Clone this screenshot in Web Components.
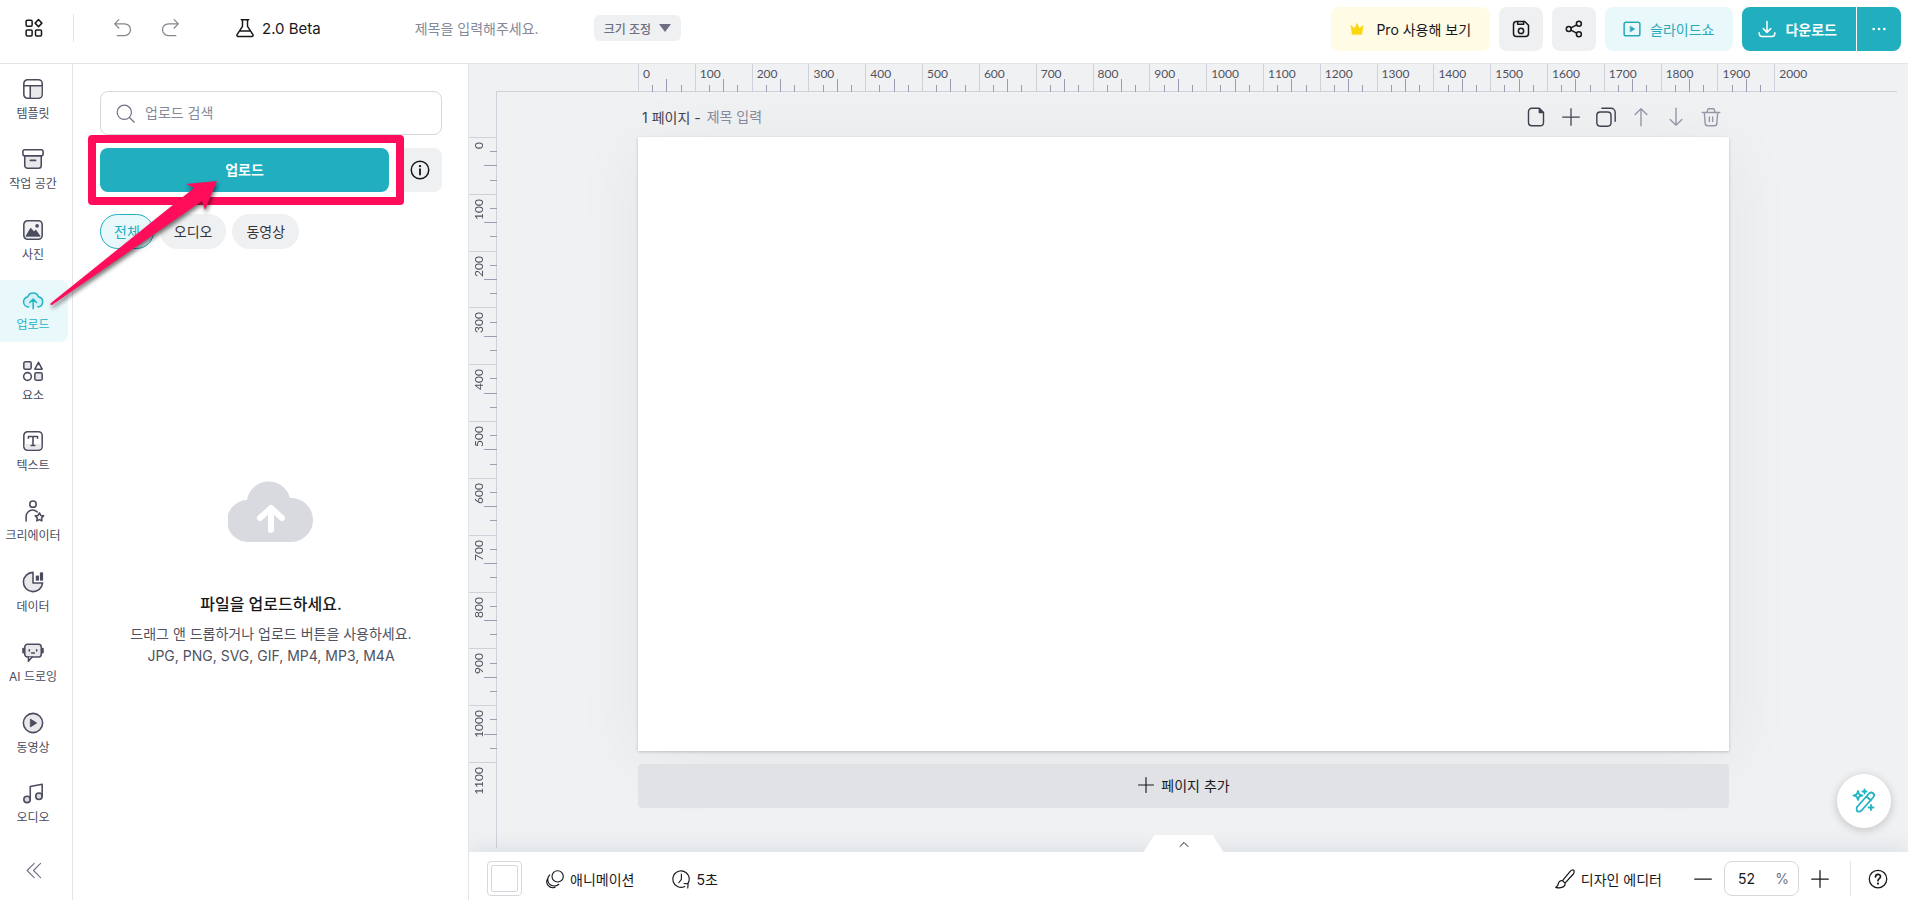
<!DOCTYPE html>
<html lang="ko">
<head>
<meta charset="UTF-8">
<meta name="viewport" content="width=device-width, initial-scale=1.0">
<title>디자인 에디터</title>
<style>
  :root {
    --teal: #21aebf;
    --teal-soft: #e8f8fb;
    --ink: #17181c;
    --text: #4a4c5e;
    --muted: #858999;
    --chip: #eff0f2;
    --line: #e3e4e8;
    --field-line: #d6d8dd;
    --ruler-line: #cfd1da;
    --tick: #9a9db1;
    --callout: #ff0c5a;
  }
  body {
    margin: 0;
    font-family: Inter, "Noto Sans CJK KR", sans-serif;
    font-size: 14px;
    color: var(--ink);
  }
</style>
</head>
<body>
<editor-app>
  <editor-header slot="header"></editor-header>
  <side-nav slot="nav">
    <nav-item icon="template">템플릿</nav-item>
    <nav-item icon="archive">작업 공간</nav-item>
    <nav-item icon="photo">사진</nav-item>
    <nav-item icon="cloud" active>업로드</nav-item>
    <nav-item icon="shapes">요소</nav-item>
    <nav-item icon="text">텍스트</nav-item>
    <nav-item icon="creator">크리에이터</nav-item>
    <nav-item icon="chart">데이터</nav-item>
    <nav-item icon="robot">AI 드로잉</nav-item>
    <nav-item icon="video">동영상</nav-item>
    <nav-item icon="music">오디오</nav-item>
  </side-nav>
  <upload-panel slot="panel">
    <filter-chip active>전체</filter-chip>
    <filter-chip>오디오</filter-chip>
    <filter-chip>동영상</filter-chip>
  </upload-panel>
  <work-space slot="workspace"></work-space>
  <bottom-bar slot="footer"></bottom-bar>
</editor-app>

<script>
/**
 * Design editor - layout and Web Components
 */

// 24x24 icons, stroked with the current colour
const ICONS = {
  apps: '<g stroke-width="2"><rect x="1.5" y="1.5" width="8" height="8" rx="1.5"/><path d="M18 .8 22.500 5.500 18 10.200l-4.500-4.700z"/><rect x="1.5" y="14.5" width="8" height="8" rx="1.5"/><rect x="14" y="14.5" width="8" height="8" rx="1.5"/></g>',
  undo: '<path d="M7 2 2 7l5 5M2 7h12a7 7 0 0 1 0 14H5"/>',
  redo: '<path d="m17 2 5 5-5 5M22 7H10a7 7 0 0 0 0 14h9"/>',
  flask: '<g stroke-width="1.800"><path d="M7.500 2h9M9 2v8L2.500 20a1.500 1.500 0 0 0 1.200 2.300h16.600a1.500 1.500 0 0 0 1.200-2.300L15 10V2M5.500 15.500h13"/></g>',
  crown: '<path d="M4 21 1.500 6 8 11l4-8.500L16 11l6.500-5L20 21z" fill="currentColor" stroke-width="1"/>',
  save: '<g stroke-width="2"><path d="M6 2h11l5 5v11a4 4 0 0 1-4 4H6a4 4 0 0 1-4-4V6a4 4 0 0 1 4-4z"/><path d="M7.500 2v3.500h8V2"/><circle cx="12" cy="14.500" r="3.500"/></g>',
  share: '<g stroke-width="2"><circle cx="5" cy="12" r="3.300"/><circle cx="18.500" cy="5" r="3.300"/><circle cx="18.500" cy="19" r="3.300"/><path d="m8 10.500 7.500-4M8 13.500l7.500 4"/></g>',
  slideshow: '<rect x="1.500" y="3" width="21" height="18" rx="2.500" stroke-width="2"/><path d="m10 8.500 5.500 3.500-5.500 3.500z" fill="currentColor" stroke-width="1"/>',
  download: '<g stroke-width="2"><path d="M12 2v14M7 11.500l5 5 5-5M1.500 17c0 3.500 1 5 4 5h13c3 0 4-1.500 4-5"/></g>',
  dots: '<g fill="currentColor" stroke="none"><circle cx="4" cy="12" r="2"/><circle cx="12" cy="12" r="2"/><circle cx="20" cy="12" r="2"/></g>',
  template: '<rect x="2" y="2" width="20" height="20" rx="4"/><path d="M9 9h12v9a3 3 0 0 1-3 3H9z" fill="#e9e9ec" stroke="none"/><path d="M2 8.500h20M9 8.500V22"/>',
  archive: '<path d="M3 8.500h18V19a3 3 0 0 1-3 3H6a3 3 0 0 1-3-3z" fill="#e9e9ec"/><rect x="1" y="2" width="22" height="6.500" rx="2" fill="#fff"/><path d="M9 13.500h6"/>',
  photo: '<rect x="2" y="2" width="20" height="20" rx="4" fill="#f1f1f3"/><path d="M4.500 18.500 9.500 10l3.500 4 2-2 4.500 6.500z" fill="currentColor" stroke-width="1"/><circle cx="16.500" cy="7.500" r="2" fill="currentColor" stroke="none"/>',
  cloud: '<path d="M7 19.500a5.500 5.500 0 0 1-.8-10.900A6.200 6.200 0 0 1 18 8.600 5.500 5.500 0 0 1 17.500 19.500" fill="#d5f1f5"/><path d="M12.200 21.500v-10M8.500 14.800l3.700-3.700 3.700 3.700"/>',
  shapes: '<rect x="2" y="2" width="8" height="8" rx="1.500" fill="#e9e9ec"/><path d="M18 2.500 22 10h-8z"/><circle cx="6" cy="18" r="4.200"/><rect x="14" y="14" width="8" height="8" rx="1.500" fill="#e9e9ec"/>',
  text: '<rect x="2" y="2" width="20" height="20" rx="4"/><path d="M3 15h18v3a3 3 0 0 1-3 3H6a3 3 0 0 1-3-3z" fill="#e9e9ec" stroke="none"/><path d="M7 9V7h10v2M12 7v10M10 17h4"/>',
  creator: '<circle cx="12" cy="4.500" r="3.500"/><path d="M4.500 23v-5a7 7 0 0 1 7-7c2 0 3.800.8 5 2"/><path d="m19 14 1.500 2.800 3 .5-2.200 2.300.4 3.200-2.700-1.400-2.800 1.400.5-3.200-2.200-2.300 3-.5z"/>',
  chart: '<path d="M12 1.500A10.500 10.500 0 1 0 22.500 13H12z" fill="#e9e9ec"/><g fill="currentColor" stroke="none"><rect x="15" y="5" width="3.500" height="5.500"/><rect x="19.500" y="1.500" width="3.500" height="9"/></g>',
  robot: '<rect x="3" y="3.500" width="18" height="14" rx="3" fill="#e9e9ec"/><path d="M7 17.500v4.500l4-4.500" fill="#e9e9ec"/><path d="M1.500 8.500v4M22.500 8.500v4" stroke-width="2.500"/><path d="M8 9.500v1.500M16 9.500v1.500M10.500 13h3"/>',
  video: '<circle cx="12" cy="12" r="10.500" fill="#e9e9ec"/><path d="m9.500 8 6.500 4-6.500 4z" fill="currentColor" stroke-width="1"/>',
  music: '<circle cx="5.500" cy="19" r="3.500" fill="#d9dade"/><circle cx="18.500" cy="15.500" r="3.500" fill="#d9dade"/><path d="M9 19V5l13-2.500v13"/>',
  collapse: '<path d="M13 2 3 12l10 10M22 2 12 12l10 10"/>',
  search: '<circle cx="10.500" cy="10.500" r="9"/><path d="m17 17 6 6"/>',
  info: '<circle cx="12" cy="12" r="10.500" stroke-width="1.800"/><path d="M12 11v6.500" stroke-width="2.200"/><circle cx="12" cy="7.300" r="1.400" fill="currentColor" stroke="none"/>',
  file: '<g stroke-width="1.700"><path d="M7 1.500h9l5 5v12a4 4 0 0 1-4 4H7a4 4 0 0 1-4-4v-13a4 4 0 0 1 4-4z"/><path d="M16 2v4.500h4.500z" fill="currentColor"/></g>',
  plus: '<path d="M12 2v20M2 12h20"/>',
  minus: '<path d="M2 12h20"/>',
  copy: '<g stroke-width="1.700"><rect x="1" y="6" width="17" height="17" rx="4"/><path d="M7 1.500h11a5 5 0 0 1 5 5V17"/></g>',
  up: '<path d="M12 22.500V2M5 9l7-7 7 7" stroke-width="1.700"/>',
  down: '<path d="M12 1.500V22M5 15l7 7 7-7" stroke-width="1.700"/>',
  trash: '<path d="M1.500 6.500h21M4 6.500l1 13a3 3 0 0 0 3 3h8a3 3 0 0 0 3-3l1-13M7 6.500l1.500-4.500h7L17 6.500M10 12v5.500M14 12v5.500" stroke-width="1.700"/>',
  motion: '<circle cx="15.500" cy="8.500" r="7.500"/><path d="M5 6.500a8.500 8.500 0 0 0 12 12.500M2.500 11a8 8 0 0 0 9.500 12"/>',
  clock: '<path d="M17 22A11 11 0 1 1 23 12c0 2.500-.8 4.500-2 6.200M12.500 5.500v7L9 17M16 18l5.500.5-.5 5.500"/>',
  brush: '<path d="M22.500 1.500c-1-.8-3-.3-4 1L9 14l3 3L22 6c1-1.300 1.300-3.700.5-4.500zM9 14c-2.500-.5-4.500 1-5 3.500-.300 2-1.300 3.500-3 4.500 3.500 1.200 9 .5 10.500-2 .5-1 .8-2 .5-3z"/>',
  help: '<circle cx="12" cy="12" r="10.500"/><path d="M9 9.500c0-4 6-4 6-.5 0 2.500-3 2.500-3 5" stroke-width="2"/><circle cx="12" cy="17.500" r="1.300" fill="currentColor" stroke="none"/>',
  caret: '<path d="m4 17 8-8 8 8" stroke-width="2"/>',
  wand: '<path d="M5.500 22.500c-1-1-1-3.500-.5-4.500L17 4.500c3-2.500 6.500.5 4.500 3.500L9.500 21.500c-1 1-3 1.300-4 1zM14.500 7.500l4.500 4M6 2l1.200 3.300L10.500 6.500 7.200 7.700 6 11 4.800 7.700 1.500 6.500l3.300-1.200z"/><path d="M12.500.5v4M10.500 2.500h4M19 16v5M16.500 18.500h5"/>'
};

// Reset shared by every shadow root that holds controls
const BASE = `
  * { box-sizing: border-box; }
  button, input {
    font: inherit;
    color: inherit;
    margin: 0;
    padding: 0;
    border: 0;
    background: none;
    outline: none;
  }
  button {
    cursor: pointer;
    display: flex;
    align-items: center;
    justify-content: center;
    white-space: nowrap;
  }
  input::placeholder { color: var(--muted); opacity: 1; }
`;

class BaseElement extends HTMLElement {
  constructor() {
    super();
    this.attachShadow({ mode: 'open' });
  }

  connectedCallback() {
    this.shadowRoot.innerHTML = `<style>${BASE}</style>${this.template()}`;
  }
}

// --- Icon ---
class UiIcon extends BaseElement {
  template() {
    const size = this.getAttribute('size') || 20;
    const weight = this.getAttribute('weight') || 1.5;
    return `
      <style>
        :host { display: block; flex: none; }
        svg { display: block; overflow: visible; }
      </style>
      <svg width="${size}" height="${size}" viewBox="0 0 24 24" fill="none" stroke="currentColor"
        stroke-width="${weight}" stroke-linecap="round" stroke-linejoin="round" aria-hidden="true">
        ${ICONS[this.getAttribute('name')]}
      </svg>
    `;
  }
}
customElements.define('ui-icon', UiIcon);

// --- App Shell ---
class EditorApp extends BaseElement {
  template() {
    return `
      <style>
        :host {
          display: grid;
          position: relative;
          height: 100vh;
          grid-template-columns: 73px 396px minmax(0, 1fr);
          grid-template-rows: 64px minmax(0, 1fr) 48px;
          grid-template-areas: "header header header" "nav panel work" "nav panel foot";
          overflow: hidden;
        }
        slot { display: contents; }
        ::slotted([slot=header]) { grid-area: header; }
        ::slotted([slot=nav]) { grid-area: nav; }
        ::slotted([slot=panel]) { grid-area: panel; z-index: 1; }
        ::slotted([slot=workspace]) { grid-area: work; }
        ::slotted([slot=footer]) { grid-area: foot; }
        .pointer {
          position: absolute;
          z-index: 2;
          left: 40px;
          top: 170px;
          pointer-events: none;
          filter: drop-shadow(1px 3px 2px rgba(0, 0, 0, .55));
        }
      </style>
      <slot name="header"></slot>
      <slot name="nav"></slot>
      <slot name="panel"></slot>
      <slot name="workspace"></slot>
      <slot name="footer"></slot>
      <svg class="pointer" width="190" height="150" viewBox="0 0 190 150" aria-hidden="true">
        <path d="M11 133 154 18l-8-4 31-3-12 29-3-9L12 135q-3 0-1-2z" fill="var(--callout)"/>
      </svg>
    `;
  }
}
customElements.define('editor-app', EditorApp);

// --- Header ---
class EditorHeader extends BaseElement {
  template() {
    return `
      <style>
        :host {
          display: flex;
          align-items: flex-start;
          justify-content: space-between;
          padding: 7px 7px 0 25px;
          border-bottom: 1px solid var(--line);
          box-sizing: border-box;
          background: #fff;
        }
        .left, .right { display: flex; align-items: center; }
        .left { height: 42px; }
        .left .sep { width: 1px; height: 28px; background: var(--line); margin: 0 39px 0 30px; }
        .history { gap: 27px; display: flex; color: #85878f; }
        .beta { gap: 7px; margin-left: 55px; font-size: 15px; }
        .name { width: 136px; margin-left: 94px; }
        .size {
          height: 26px;
          padding: 0 10px;
          gap: 8px;
          margin: 0 0 0 43px;
          border-radius: 6px;
          background: var(--chip);
          color: #6d7083;
          font-size: 12px;
          font-weight: 500;
        }
        .size i {
          border: 6px solid transparent;
          border-top: 8px solid currentColor;
          border-bottom: 0;
        }
        .right { gap: 9px; }
        .right button { height: 44px; border-radius: 8px; }
        .pro { background: #fffbe5; padding: 0 19px; gap: 12px; }
        .pro ui-icon { color: #fbd60b; }
        .square { width: 44px; background: var(--chip); }
        .slides { background: var(--teal-soft); color: #28a9b9; padding: 0 19px 0 18px; gap: 9px; }
        .split { display: flex; gap: 1px; color: #fff; font-weight: 700; }
        .split button { background: var(--teal); }
        .split .main { padding: 0 19px 0 16px; gap: 9px; border-radius: 8px 0 0 8px; }
        .split .more { width: 44px; border-radius: 0 8px 8px 0; }
      </style>
      <div class="left">
        <button aria-label="메뉴"><ui-icon name="apps" size="18"></ui-icon></button>
        <span class="sep"></span>
        <div class="history">
          <button aria-label="실행 취소"><ui-icon name="undo"></ui-icon></button>
          <button aria-label="다시 실행"><ui-icon name="redo"></ui-icon></button>
        </div>
        <button class="beta"><ui-icon name="flask"></ui-icon>2.0 Beta</button>
        <input class="name" type="text" aria-label="제목" placeholder="제목을 입력해주세요.">
        <button class="size">크기 조정<i></i></button>
      </div>
      <div class="right">
        <button class="pro"><ui-icon name="crown" size="14"></ui-icon>Pro 사용해 보기</button>
        <button class="square" aria-label="저장"><ui-icon name="save" size="18"></ui-icon></button>
        <button class="square" aria-label="공유"><ui-icon name="share" size="18"></ui-icon></button>
        <button class="slides"><ui-icon name="slideshow" size="18"></ui-icon>슬라이드쇼</button>
        <div class="split">
          <button class="main"><ui-icon name="download" size="18"></ui-icon>다운로드</button>
          <button class="more" aria-label="더 보기"><ui-icon name="dots" size="16"></ui-icon></button>
        </div>
      </div>
    `;
  }
}
customElements.define('editor-header', EditorHeader);

// --- Side Navigation ---
class NavItem extends BaseElement {
  template() {
    return `
      <style>
        :host { display: block; color: var(--text); }
        :host([active]) { color: #24b5c7; }
        button {
          width: 68px;
          height: 62px;
          padding: 1px 2px 0 0;
          flex-direction: column;
          gap: 5px;
          font-size: 12px;
          line-height: 18px;
          border-radius: 0 8px 8px 0;
        }
        :host([active]) button { background: var(--teal-soft); }
      </style>
      <button>
        <ui-icon name="${this.getAttribute('icon')}" size="22" weight="1.700"></ui-icon>
        <span><slot></slot></span>
      </button>
    `;
  }
}
customElements.define('nav-item', NavItem);

class SideNav extends BaseElement {
  template() {
    return `
      <style>
        :host {
          display: flex;
          flex-direction: column;
          border-right: 1px solid var(--line);
          box-sizing: border-box;
          background: #fff;
        }
        nav {
          flex: 1;
          display: flex;
          flex-direction: column;
          justify-content: space-between;
          padding-top: 5px;
        }
        .collapse { width: 66px; height: 60px; color: #6d7083; margin-top: 5px; }
      </style>
      <nav><slot></slot></nav>
      <button class="collapse" aria-label="접기"><ui-icon name="collapse" size="17"></ui-icon></button>
    `;
  }
}
customElements.define('side-nav', SideNav);

// --- Upload Panel ---
class FilterChip extends BaseElement {
  template() {
    return `
      <style>
        :host { display: block; color: #33343c; }
        :host([active]) { color: var(--teal); }
        button {
          height: 35px;
          padding: 0 13px 2px;
          border: 1px solid var(--chip);
          border-radius: 18px;
          background: var(--chip);
        }
        :host([active]) button { background: var(--teal-soft); border-color: var(--teal); }
      </style>
      <button><slot></slot></button>
    `;
  }
}
customElements.define('filter-chip', FilterChip);

class UploadPanel extends BaseElement {
  template() {
    return `
      <style>
        :host {
          display: flex;
          flex-direction: column;
          padding: 27px 26px 0 27px;
          border-right: 1px solid var(--line);
          box-sizing: border-box;
          background: #fff;
        }
        .search {
          display: flex;
          align-items: center;
          gap: 10px;
          height: 44px;
          padding: 0 15px;
          border: 1px solid var(--field-line);
          border-radius: 8px;
          color: #6d7083;
        }
        .search input { flex: 1; min-width: 0; padding-bottom: 2px; }
        .actions { display: flex; gap: 9px; margin-top: 13px; }
        .upload { flex: 1; position: relative; }
        .upload button {
          width: 100%;
          height: 44px;
          padding-bottom: 2px;
          border-radius: 8px;
          background: var(--teal);
          color: #fff;
          font-weight: 700;
        }
        .upload::after {
          content: "";
          position: absolute;
          inset: -13px -15px -13px -12px;
          border: 8px solid var(--callout);
          border-radius: 4px;
          box-shadow: inset 0 0 0 4px #fff;
          pointer-events: none;
        }
        .info { width: 44px; height: 44px; border-radius: 8px; background: var(--chip); }
        .chips { display: flex; gap: 6px; margin-top: 22px; }
        .empty {
          flex: 1;
          display: flex;
          flex-direction: column;
          align-items: center;
          padding-top: 231px;
          text-align: center;
          color: #50525f;
        }
        h2 { margin: 48px 0 5px; font-size: 16px; line-height: 28px; font-weight: 500; color: var(--ink); }
        p { margin: 0; line-height: 22px; white-space: nowrap; }
      </style>
      <label class="search">
        <ui-icon name="search" size="19"></ui-icon>
        <input type="text" aria-label="업로드 검색" placeholder="업로드 검색">
      </label>
      <div class="actions">
        <div class="upload"><button>업로드</button></div>
        <button class="info" aria-label="정보"><ui-icon name="info"></ui-icon></button>
      </div>
      <div class="chips"><slot></slot></div>
      <div class="empty">
        <svg width="86" height="62" viewBox="0 0 86 62" aria-hidden="true">
          <path d="M21 62a21 21 0 0 1-2-42 22 22 0 0 1 43-2 22 22 0 0 1 2 44z" fill="#d9dadf"/>
          <path d="M43 50V29M32 38l11-10 11 10" fill="none" stroke="#fff" stroke-width="6" stroke-linecap="round" stroke-linejoin="round"/>
        </svg>
        <h2>파일을 업로드하세요.</h2>
        <p>드래그 앤 드롭하거나 업로드 버튼을 사용하세요.<br>JPG, PNG, SVG, GIF, MP4, MP3, M4A</p>
      </div>
    `;
  }
}
customElements.define('upload-panel', UploadPanel);

// --- Ruler ---
// Each cell covers 100 units; "extent" is how many units the page spans.
class RulerStrip extends BaseElement {
  template() {
    const extent = Number(this.getAttribute('extent'));
    const last = Number(this.getAttribute('last'));
    let cells = '';
    for (let i = 0; i <= last; i += 100) {
      cells += `<div class="cell${i === last ? ' end' : ''}"><span>${i}</span><i></i><i class="mid"></i><i></i></div>`;
    }
    return `
      <style>
        :host { display: flex; min-width: 0; min-height: 0; font: 12px/14px Lato, sans-serif; color: #50525f; }
        :host([vertical]) { flex-direction: column; }
        .cell {
          flex: 0 0 calc(100% * 100 / ${extent});
          position: relative;
          display: flex;
          align-items: flex-end;
          justify-content: space-evenly;
          border-left: 1px solid var(--ruler-line);
        }
        span { position: absolute; left: 4px; top: 3px; }
        i { width: 1px; height: 7px; background: var(--tick); }
        .mid { height: 13px; }
        .end i { visibility: hidden; }
        :host([vertical]) .cell { flex-direction: column; border-left: 0; border-top: 1px solid var(--ruler-line); }
        :host([vertical]) span { left: 3px; top: 4px; writing-mode: vertical-rl; transform: rotate(180deg); }
        :host([vertical]) i { width: 7px; height: 1px; }
        :host([vertical]) .mid { width: 13px; }
      </style>
      ${cells}
    `;
  }
}
customElements.define('ruler-strip', RulerStrip);

// --- Workspace ---
class WorkSpace extends BaseElement {
  template() {
    return `
      <style>
        :host {
          display: grid;
          position: relative;
          grid-template-columns: 28px 141px minmax(0, 1fr) 179px;
          grid-template-rows: 28px 45px auto 1fr;
          background: #f0f1f3;
          overflow: hidden;
        }
        .line-x { grid-area: 1 / 1 / 2 / 5; border-bottom: 1px solid var(--ruler-line); margin: 0 11px 0 27px; }
        .line-y { grid-area: 2 / 1 / 5 / 2; border-right: 1px solid var(--ruler-line); margin-bottom: 4px; }
        .top { grid-area: 1 / 3; }
        .side { grid-area: 3 / 1; }
        .head {
          grid-area: 2 / 3;
          position: relative;
          z-index: 1;
          display: flex;
          align-items: center;
          padding: 4px 8px 0 4px;
          color: #3f414e;
        }
        .head input { flex: 1; min-width: 0; margin-left: 6px; }
        .tools { display: flex; gap: 15px; }
        .off { color: #9598a8; }
        .page {
          grid-area: 3 / 3;
          aspect-ratio: 16 / 9;
          background: #fff;
          box-shadow: 0 1px 3px rgba(0, 0, 0, .2), 0 10px 70px rgba(0, 0, 0, .05);
        }
        .add {
          grid-area: 4 / 3;
          align-self: start;
          position: relative;
          height: 44px;
          margin-top: 13px;
          padding-bottom: 2px;
          gap: 6px;
          border-radius: 4px;
          background: #e1e2e6;
        }
        .fab {
          position: absolute;
          right: 17px;
          bottom: 24px;
          width: 54px;
          height: 54px;
          border-radius: 50%;
          background: #fff;
          color: #22b3c4;
          box-shadow: 0 2px 10px rgba(0, 0, 0, .2);
        }
      </style>
      <div class="line-x"></div>
      <div class="line-y"></div>
      <ruler-strip class="top" extent="1920" last="2000"></ruler-strip>
      <ruler-strip class="side" vertical extent="1080" last="1100"></ruler-strip>
      <div class="page"></div>
      <div class="head">
        <span>1 페이지 -</span>
        <input type="text" aria-label="페이지 제목" placeholder="제목 입력">
        <div class="tools">
          <button aria-label="메모"><ui-icon name="file"></ui-icon></button>
          <button aria-label="추가"><ui-icon name="plus"></ui-icon></button>
          <button aria-label="복제"><ui-icon name="copy"></ui-icon></button>
          <button class="off" aria-label="위로"><ui-icon name="up"></ui-icon></button>
          <button class="off" aria-label="아래로"><ui-icon name="down"></ui-icon></button>
          <button class="off" aria-label="삭제"><ui-icon name="trash"></ui-icon></button>
        </div>
      </div>
      <button class="add"><ui-icon name="plus" size="18"></ui-icon>페이지 추가</button>
      <button class="fab" aria-label="AI 도구"><ui-icon name="wand" size="24" weight="1.800"></ui-icon></button>
    `;
  }
}
customElements.define('work-space', WorkSpace);

// --- Bottom Bar ---
class BottomBar extends BaseElement {
  template() {
    return `
      <style>
        :host {
          display: flex;
          align-items: center;
          justify-content: space-between;
          position: relative;
          padding: 5px 20px 0 18px;
          box-sizing: border-box;
          background: #fff;
          box-shadow: 0 0 24px rgba(40, 90, 110, .14);
        }
        .group { display: flex; align-items: center; }
        .left button { gap: 6px; }
        .swatch { width: 35px; height: 35px; padding: 3px; border: 1px solid var(--field-line); border-radius: 4px; }
        .swatch i { width: 100%; height: 100%; border: 1px solid var(--field-line); border-radius: 2px; }
        .motion { margin-left: 24px; }
        .time { margin-left: 38px; }
        .design { gap: 6px; margin-right: 31px; }
        .zoom {
          display: flex;
          align-items: center;
          width: 75px;
          height: 35px;
          margin: 0 11px;
          padding: 0 9px 0 13px;
          border: 1px solid var(--field-line);
          border-radius: 8px;
          color: #6d7083;
          font-size: 14px;
        }
        .zoom input { flex: 1; min-width: 0; color: var(--ink); }
        .sep { width: 1px; height: 35px; margin: 0 17px 0 20px; background: var(--line); }
        .tab {
          position: absolute;
          left: 50%;
          bottom: 100%;
          width: 80px;
          height: 17px;
          margin-left: -45px;
          background: #fff;
          clip-path: polygon(11px 0, 69px 0, 100% 100%, 0 100%);
        }
      </style>
      <button class="tab" aria-label="펼치기"><ui-icon name="caret" size="12"></ui-icon></button>
      <div class="group left">
        <button class="swatch" aria-label="배경색"><i></i></button>
        <button class="motion"><ui-icon name="motion" size="18"></ui-icon>애니메이션</button>
        <button class="time"><ui-icon name="clock" size="18"></ui-icon>5초</button>
      </div>
      <div class="group">
        <button class="design"><ui-icon name="brush"></ui-icon>디자인 에디터</button>
        <button aria-label="축소"><ui-icon name="minus"></ui-icon></button>
        <label class="zoom"><input type="text" value="52" aria-label="확대 비율">%</label>
        <button aria-label="확대"><ui-icon name="plus"></ui-icon></button>
        <span class="sep"></span>
        <button aria-label="도움말"><ui-icon name="help"></ui-icon></button>
      </div>
    `;
  }
}
customElements.define('bottom-bar', BottomBar);
</script>
</body>
</html>
